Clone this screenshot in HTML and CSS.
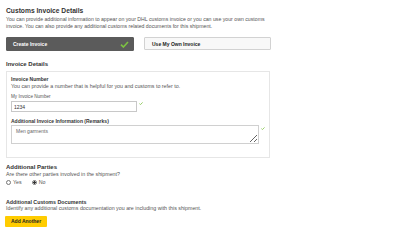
FILE: index.html
```html
<!DOCTYPE html>
<html lang="en">
  <head>
    <meta charset="UTF-8" />
    <meta name="viewport" content="width=device-width, initial-scale=1.0" />
    <title>Customs Invoice Details</title>
    <link rel="stylesheet" href="styles.css">
  </head>
  <body>
    <div class="page">
      <!-- Header -->
      <h1 class="title">Customs Invoice Details</h1>
      <p class="intro">
        You can provide additional information to appear on your DHL customs
        invoice or you can use your own customs invoice. You can also provide
        any additional customs related documents for this shipment.
      </p>

      <!-- Invoice choice -->
      <div class="choice">
        <button type="button" class="choice-btn choice-btn-active">
          <span>Create Invoice</span>
          <svg class="choice-check" width="9" height="7" viewBox="0 0 9 7">
            <path d="M1 3.6 L3.4 6 L8 1" fill="none" stroke="#7dc242" stroke-width="1.6" />
          </svg>
        </button>
        <button type="button" class="choice-btn">Use My Own Invoice</button>
      </div>

      <!-- Invoice details -->
      <h2 class="section-title">Invoice Details</h2>
      <div class="panel">
        <p class="field-title">Invoice Number</p>
        <p class="hint">You can provide a number that is helpful for you and customs to refer to.</p>
        <label class="label" for="invoiceNumber">My Invoice Number</label>
        <div class="field-row">
          <input id="invoiceNumber" class="input" type="text" value="1234" />
          <svg class="valid" width="4" height="3" viewBox="0 0 4 3">
            <path d="M0.4 1.6 L1.5 2.6 L3.6 0.4" fill="none" stroke="#7dc242" stroke-width="0.8" />
          </svg>
        </div>

        <p class="field-title field-title-spaced">Additional Invoice Information (Remarks)</p>
        <div class="field-row">
          <textarea class="textarea">Men garments</textarea>
          <svg class="valid" width="4" height="3" viewBox="0 0 4 3">
            <path d="M0.4 1.6 L1.5 2.6 L3.6 0.4" fill="none" stroke="#7dc242" stroke-width="0.8" />
          </svg>
        </div>
      </div>

      <!-- Additional parties -->
      <h2 class="section-title section-title-parties">Additional Parties</h2>
      <p class="hint">Are there other parties involved in the shipment?</p>
      <div class="radios">
        <label class="radio-option">
          <input class="radio" type="radio" name="parties" value="yes" />
          Yes
        </label>
        <label class="radio-option">
          <input class="radio" type="radio" name="parties" value="no" checked />
          No
        </label>
      </div>

      <!-- Additional documents -->
      <h3 class="sub-title">Additional Customs Documents</h3>
      <p class="hint">Identify any additional customs documentation you are including with this shipment.</p>
      <button type="button" class="add-btn">Add Another</button>
    </div>
  </body>
</html>
```

FILE: styles.css
```css
* {
  margin: 0;
  padding: 0;
  box-sizing: border-box;
}
body {
  margin: 0;
  padding: 0;
  font-family: "Liberation Sans", Arial, sans-serif;
  background-color: #fff;
  color: #333;
}

.page {
  width: 271px;
  padding: 7px 0 0 6px;
}

.title {
  font-size: 6.7px;
  line-height: 8px;
  font-weight: bold;
  color: #333;
}

.intro {
  width: 268px;
  margin-top: 0.5px;
  font-size: 5.2px;
  line-height: 7px;
  color: #555;
}

.choice {
  display: flex;
  align-items: flex-start;
  gap: 10px;
  margin-top: 7.5px;
}

.choice-btn {
  width: 127px;
  height: 13px;
  padding: 0 7px;
  display: flex;
  align-items: center;
  font-family: inherit;
  font-size: 5px;
  font-weight: bold;
  color: #222;
  text-align: left;
  background-color: #f8f8f8;
  border: 1px solid #d2d2d2;
  border-radius: 1px;
}

.choice-btn-active {
  width: 128px;
  height: 14px;
  padding: 0 4px 0 6px;
  justify-content: space-between;
  color: #fff;
  background-color: #5b5b5b;
  border-color: #5b5b5b;
}

.choice-check {
  display: block;
}

.section-title {
  margin-top: 9px;
  font-size: 6px;
  line-height: 8px;
  font-weight: bold;
  color: #333;
}

.section-title-parties {
  margin-top: 5px;
}

.panel {
  width: 264px;
  margin-top: 3px;
  padding: 3.5px 4px 13px 4px;
  border: 1px solid #e6e6e6;
}

.field-title {
  font-size: 5px;
  line-height: 7px;
  font-weight: bold;
  color: #333;
}

.field-title-spaced {
  margin-top: 6px;
}

.hint {
  font-size: 5.3px;
  line-height: 7px;
  color: #555;
}

.label {
  display: block;
  margin-top: 4.5px;
  font-size: 4.6px;
  line-height: 6px;
  color: #555;
}

.field-row {
  display: flex;
  align-items: flex-start;
  gap: 2px;
}

.input {
  width: 126px;
  height: 11px;
  margin-top: 1px;
  padding: 0 2px;
  font-family: inherit;
  font-size: 5px;
  color: #333;
  background-color: #fff;
  border: 1px solid #c8c8c8;
}
.input:focus,
.textarea:focus {
  outline: none;
}

.valid {
  display: block;
  margin-top: 2px;
}

.textarea {
  width: 254px;
  height: 19px;
  padding: 2px 4px;
  font-family: inherit;
  font-size: 5px;
  line-height: 6px;
  color: #666;
  background-color: #fff;
  border: 1px solid #d0d0d0;
}

.radios {
  display: flex;
  gap: 10px;
  margin-top: 1px;
  font-size: 5.3px;
  line-height: 7px;
  color: #555;
}

.radio-option {
  display: flex;
  align-items: center;
  gap: 2px;
}

.radio {
  appearance: none;
  width: 5px;
  height: 5px;
  border: 0.6px solid #777;
  border-radius: 50%;
  background-color: #fff;
}

.radio:checked {
  background: radial-gradient(circle, #333 0 1.2px, #fff 1.4px);
}

.sub-title {
  margin-top: 12.5px;
  font-size: 5.3px;
  line-height: 6px;
  font-weight: bold;
  color: #333;
}

.add-btn {
  display: block;
  height: 11px;
  margin-top: 4px;
  margin-left: -1px;
  padding: 0 6px;
  font-family: inherit;
  font-size: 5px;
  font-weight: bold;
  color: #222;
  background-color: #ffcc00;
  border: none;
  border-radius: 1px;
}
```
